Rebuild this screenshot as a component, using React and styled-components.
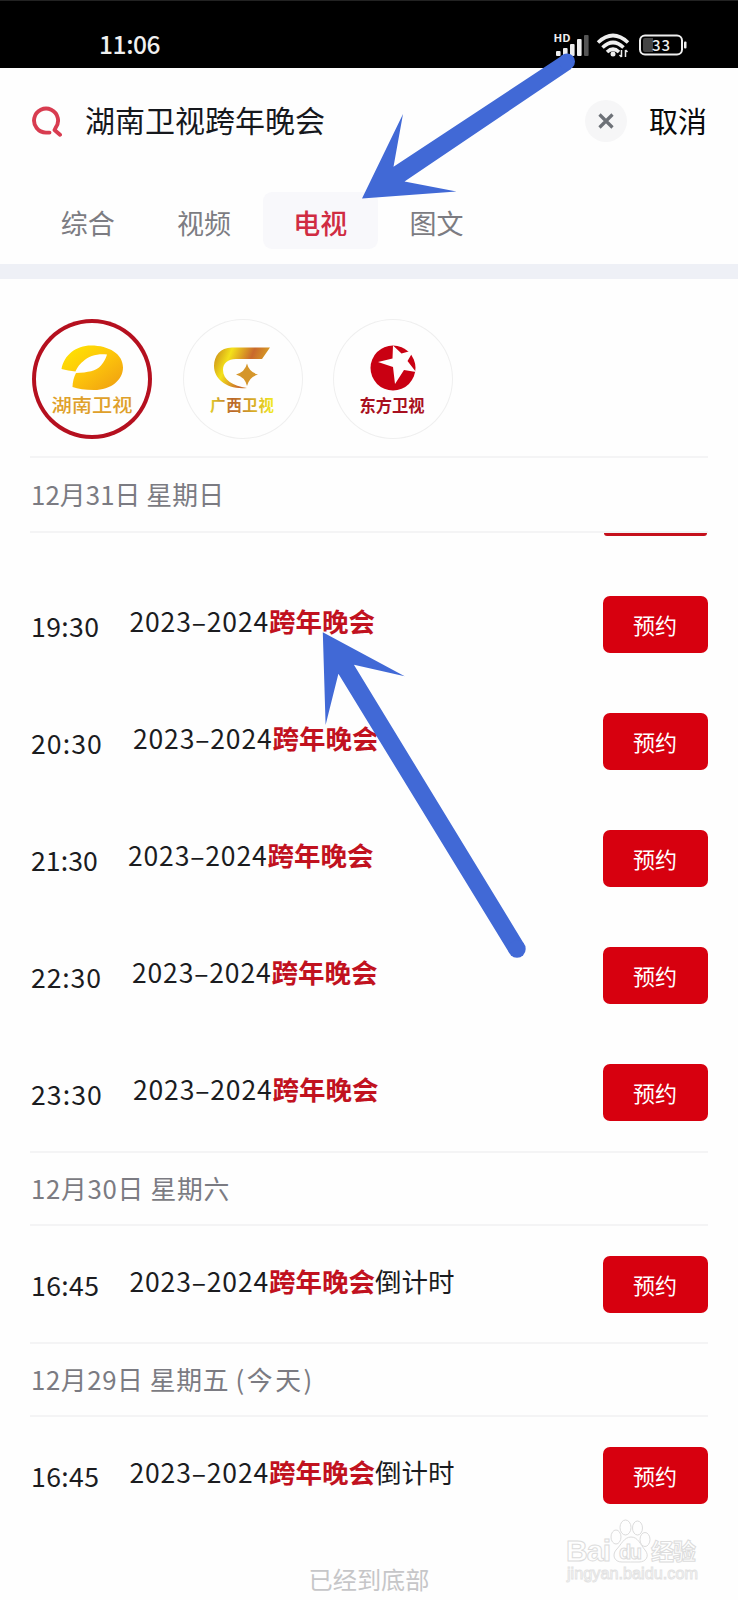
import React from "react";
import styled, { createGlobalStyle } from "styled-components";

const GlobalStyle = createGlobalStyle`
* {
  box-sizing: border-box;
}

body {
  margin: 0;
  background: #fefefe;
  font-family: "Noto Sans CJK SC", sans-serif;
}
`

const Screen = styled.div`
position: relative;
width: 738px;
height: 1600px;
overflow: hidden;
background: #fefefe;
`

const StatusBar = styled.div`
display: flex;
justify-content: space-between;
align-items: center;
height: 68px;
padding: 20px 51px 0 99px;
background: #000;
border-top: 1px solid #222;
`

const Clock = styled.div`
padding-bottom: 2px;
font-size: 24.5px;
line-height: 30px;
font-weight: 500;
letter-spacing: -0.4px;
color: #f0f0f0;
`

const StatusIcons = styled.svg`
display: block;
width: 136px;
height: 28px;
`

const SearchBar = styled.div`
display: flex;
align-items: center;
height: 106px;
padding: 0 31px 0 32px;
`

const SearchIcon = styled.svg`
width: 31px;
height: 31px;
margin-right: 22px;
`

const Query = styled.div`
flex: 1;
padding-bottom: 4px;
font-size: 30px;
line-height: 40px;
color: #16181d;
`

const ClearButton = styled.button`
display: flex;
justify-content: center;
align-items: center;
width: 42px;
height: 42px;
padding: 0;
margin-right: 22px;
border: none;
border-radius: 50%;
background: #f6f6f7;
`

const Cancel = styled.div`
padding-bottom: 2px;
font-size: 29px;
line-height: 40px;
color: #08090b;
`

const Tabs = styled.div`
display: flex;
gap: 1px;
height: 90px;
padding: 18px 0 0 30px;
`

const Tab = styled.div`
width: 115.3px;
height: 57px;
border-radius: 9px;
text-align: center;
font-size: 27px;
line-height: 61px;
font-weight: ${props => (props.$active ? 500 : 400)};
color: ${props => (props.$active ? "#d02c42" : "#7c7c82")};
background: ${props => (props.$active ? "#f8f8fb" : "transparent")};
`

const Strip = styled.div`
height: 15px;
background: #eef0f6;
`

const Channels = styled.div`
display: flex;
gap: 30.5px;
height: 177px;
padding: 40px 32px 0;
`

const Channel = styled.div`
width: 120px;
height: 120px;
border-radius: 50%;
box-shadow: inset 0 0 0 ${props => (props.$active ? "4px #b5101f" : "1px #efefef")};

svg {
  display: block;
}
`

const DateBar = styled.div`
height: ${props => props.$height}px;
margin: 0 30px;
padding-left: 1px;
border-top: 2px solid #f4f4f5;
border-bottom: 2px solid #f4f4f5;
font-size: 25.8px;
line-height: ${props => props.$height - 5}px;
letter-spacing: ${props => props.$spacing}px;
color: #7b7b82;
`

const Today = styled.span`
letter-spacing: 2.6px;
`

const Clipped = styled.div`
display: flex;
justify-content: flex-end;
align-items: flex-start;
height: 33px;
padding: 0 31px 0 0;
overflow: hidden;
`

const ClippedButton = styled.div`
width: 103px;
height: 3px;
border-radius: 0 0 7px 7px;
background: #c5101c;
`

const Row = styled.div`
display: flex;
align-items: center;
height: ${props => props.$height || 117}px;
padding: 0 30px 0 31px;
`

const Time = styled.div`
flex: none;
width: ${props => props.$width}px;
margin: 2px 31px 0 0;
font-size: 26.6px;
line-height: 40px;
letter-spacing: ${props => (props.$width - 65.5) / 5}px;
white-space: nowrap;
color: #1b1c1f;
`

const Title = styled.div`
flex: 1;
padding-bottom: 7px;
font-size: 26.5px;
line-height: 40px;
white-space: nowrap;
color: #1b1c1f;
`

const Years = styled.span`
letter-spacing: 0.85px;
`

const Keyword = styled.span`
font-weight: 700;
color: #c1121f;
`

const Book = styled.button`
width: 105px;
height: 57px;
padding: 0 1px 1px 0;
border: none;
border-radius: 7px;
background: #d7000f;
color: #fff;
font-family: inherit;
font-size: 22px;
line-height: 56px;
`

const Bottom = styled.div`
padding-top: 28px;
text-align: center;
font-size: 24.2px;
line-height: 36px;
color: #c6c6c8;
`

// annotations and watermark sit on top of the list
const Overlay = styled.svg`
position: absolute;
top: 0;
left: 0;
pointer-events: none;
`

const Hunan = () => (
  <svg width="120" height="120" viewBox="0 0 120 120">
    <defs>
      <linearGradient id="egg" x1="0" y1="0" x2="1" y2="1">
        <stop offset="0" stopColor="#ffe800" />
        <stop offset="0.5" stopColor="#fdc50b" />
        <stop offset="1" stopColor="#ee9b12" />
      </linearGradient>
    </defs>
    <path
      fill="url(#egg)"
      d="M29.500 50C32 36 44 26.500 59 26.500C77 26.500 91 35 91 48.500C91 61 79 71 62 71C53 71 46 70 40.500 68C40.500 63 42 57.500 44 54C56 53.500 64 52 69 46.500C72 43 74 39 75 35.500C65 34.500 57 37 51 42.500C46.500 46 44.500 50 43.500 52.500Q36 51.500 29.500 50Z"
    />
    <text x="19.500" y="93" fontSize="18.500" fontWeight="500" textLength="81" lengthAdjust="spacingAndGlyphs" fill="#dfa02a">湖南卫视</text>
  </svg>
)

const Guangxi = () => (
  <svg width="120" height="120" viewBox="0 0 120 120">
    <defs>
      <linearGradient id="swoosh" x1="0" y1="0.100" x2="1" y2="0.400">
        <stop offset="0" stopColor="#c98a1c" />
        <stop offset="0.280" stopColor="#f4e21a" />
        <stop offset="0.650" stopColor="#c9682c" />
        <stop offset="1" stopColor="#dcae22" />
      </linearGradient>
      <linearGradient id="gxText">
        <stop offset="0" stopColor="#e3cf2a" />
        <stop offset="0.350" stopColor="#b9652a" />
        <stop offset="0.650" stopColor="#d6a728" />
        <stop offset="1" stopColor="#f2ee22" />
      </linearGradient>
    </defs>
    <path
      fill="url(#swoosh)"
      d="M87 28.500H49C37 28.500 31 37 31 47C31 60 44 71 64 69C50 67 40 61 40 51C40 44 45 40 53 40H79Z"
    />
    <path fill="#d5962b" d="M64 44.500Q66 53 75 55.500Q66 58 64 67Q62 58 53 55.500Q62 53 64 44.500Z" />
    <text x="27" y="92" fontSize="15.500" fontWeight="700" textLength="64" fill="url(#gxText)">广西卫视</text>
  </svg>
)

const Dongfang = () => (
  <svg width="120" height="120" viewBox="0 0 120 120">
    <circle cx="60" cy="49" r="22.500" fill="#c90012" />
    <path
      fill="#fefefe"
      d="M60 26.500L68.500 34.500L81 31L74.500 42L83 53L71 51L62 65L60 48L45 43L59.500 39.500Z"
    />
    <text x="26.500" y="93" fontSize="17.500" fontWeight="700" textLength="65" lengthAdjust="spacingAndGlyphs" fill="#a80f20">东方卫视</text>
  </svg>
)

const Program = ({ time, width, height, extra }) => (
  <Row $height={height}>
    <Time $width={width}>{time}</Time>
    <Title>
      <Years>2023–2024</Years>
      <Keyword>跨年晚会</Keyword>
      {extra}
    </Title>
    <Book type="button">预约</Book>
  </Row>
)

const tabs = ["综合", "视频", "电视", "图文"]

const evening = [
  { time: "19:30", width: 67.5 },
  { time: "20:30", width: 71 },
  { time: "21:30", width: 66 },
  { time: "22:30", width: 70 },
  { time: "23:30", width: 71 }
]

const App = () => {
  return (
    <Screen>
      <GlobalStyle />
      <StatusBar>
        <Clock>11:06</Clock>
        <StatusIcons viewBox="551 30 136 28">
          <text x="553.500" y="41" fontSize="10.500" fontWeight="700" textLength="17" lengthAdjust="spacingAndGlyphs" fill="#eee">HD</text>
          <g fill="#eee">
            <rect x="556" y="50" width="4.600" height="5" rx="1" />
            <rect x="563" y="47" width="4.600" height="8" rx="1" />
            <rect x="570" y="43" width="4.600" height="12" rx="1" />
            <rect x="577" y="38" width="4.600" height="17" rx="1" />
            <rect x="584" y="34" width="4.600" height="21" rx="1" fill="#555" />
          </g>
          <g fill="none" stroke="#eee" strokeWidth="3.600">
            <path d="M598 41.500Q613 27.500 628 41.500" />
            <path d="M602.500 46.500Q613 36.500 623.500 46.500" />
            <path d="M607 51Q613 45.500 619 51" />
          </g>
          <circle cx="613" cy="53" r="2.500" fill="#eee" />
          <path d="M621.500 49V56M619.500 54L621.500 56M625.500 56V49M627.500 51L625.500 49" stroke="#eee" strokeWidth="1.500" fill="none" />
          <rect x="640" y="34.500" width="42" height="19" rx="5" fill="none" stroke="#eee" strokeWidth="2" />
          <path d="M645 37H653V51H645Q643 51 643 49V39Q643 37 645 37Z" fill="#444" />
          <rect x="684" y="40.500" width="2.500" height="7" rx="1" fill="#eee" />
          <text x="661" y="49.500" fontSize="15" fontWeight="500" textAnchor="middle" textLength="18" fill="#eee">33</text>
        </StatusIcons>
      </StatusBar>

      <SearchBar>
        <SearchIcon viewBox="0 0 31 31" fill="none" stroke="#d83c50" strokeWidth="3.900" strokeLinecap="round" strokeLinejoin="round">
          <path d="M17.500 26.600H14A12 12 0 1 1 23.500 22L22.500 24L28 28.800" />
        </SearchIcon>
        <Query>湖南卫视跨年晚会</Query>
        <ClearButton type="button">
          <svg width="16" height="16" viewBox="0 0 16 16" stroke="#6d7177" strokeWidth="3.200">
            <path d="M1.500 1.500L14.500 14.500M14.500 1.500L1.500 14.500" />
          </svg>
        </ClearButton>
        <Cancel>取消</Cancel>
      </SearchBar>

      <Tabs>
        {tabs.map(tab => (
          <Tab key={tab} $active={tab === "电视"}>{tab}</Tab>
        ))}
      </Tabs>
      <Strip />

      <Channels>
        <Channel $active><Hunan /></Channel>
        <Channel><Guangxi /></Channel>
        <Channel><Dongfang /></Channel>
      </Channels>

      <DateBar $height={77} $spacing={0.1}>12月31日 星期日</DateBar>
      <Clipped><ClippedButton /></Clipped>
      {evening.map(item => (
        <Program key={item.time} {...item} />
      ))}

      <DateBar $height={75} $spacing={0.7}>12月30日 星期六</DateBar>
      <Program time="16:45" width={67.500} height={116} extra="倒计时" />

      <DateBar $height={75} $spacing={0.6}>
        12月29日 星期五 <Today>(今天)</Today>
      </DateBar>
      <Program time="16:45" width={67.500} height={116} extra="倒计时" />

      <Bottom>已经到底部</Bottom>

      <Overlay width="738" height="1600" viewBox="0 0 738 1600">
        <g fill="#4169d6">
          <path d="M362 198.500L403 114L393.500 166.700L562.600 55.300L571.400 68.700L404.500 181.500L456.500 191.500Z" />
          <circle cx="567" cy="61.500" r="8" />
          <path d="M322.800 632.300L404.700 676.300L353.900 664.700L524.400 944.500L509.600 953.500L338.400 673.700L325.600 725Z" />
          <circle cx="517" cy="949" r="8.700" />
        </g>
        <g fill="#fefefe" stroke="#dcdcdc" strokeWidth="1">
          <text x="566" y="1561" fontSize="30" fontWeight="700" fontFamily="Liberation Sans, sans-serif" textLength="45">Bai</text>
          <ellipse cx="616" cy="1537" rx="5" ry="7" />
          <ellipse cx="625.500" cy="1527.500" rx="5.500" ry="7.500" />
          <ellipse cx="637.500" cy="1528" rx="5" ry="7" />
          <ellipse cx="645" cy="1539.500" rx="5" ry="7" />
          <path d="M631 1537C638 1537 640 1544 645 1550C650 1556 646 1562 639 1562C634 1562 627 1562 622 1562C614 1562 612 1555 616 1550C621 1545 624 1537 631 1537Z" />
          <text x="619" y="1559" fontSize="20" fontWeight="700" fontFamily="Liberation Sans, sans-serif" textLength="23">du</text>
          <text x="651" y="1560" fontSize="23" fontWeight="700" textLength="45">经验</text>
          <text x="567" y="1579" fontSize="16" fontFamily="Liberation Sans, sans-serif" textLength="131" lengthAdjust="spacingAndGlyphs" stroke="#e2e2e2" strokeWidth="0.900">jingyan.baidu.com</text>
        </g>
      </Overlay>
    </Screen>
  );
};

export default App;
